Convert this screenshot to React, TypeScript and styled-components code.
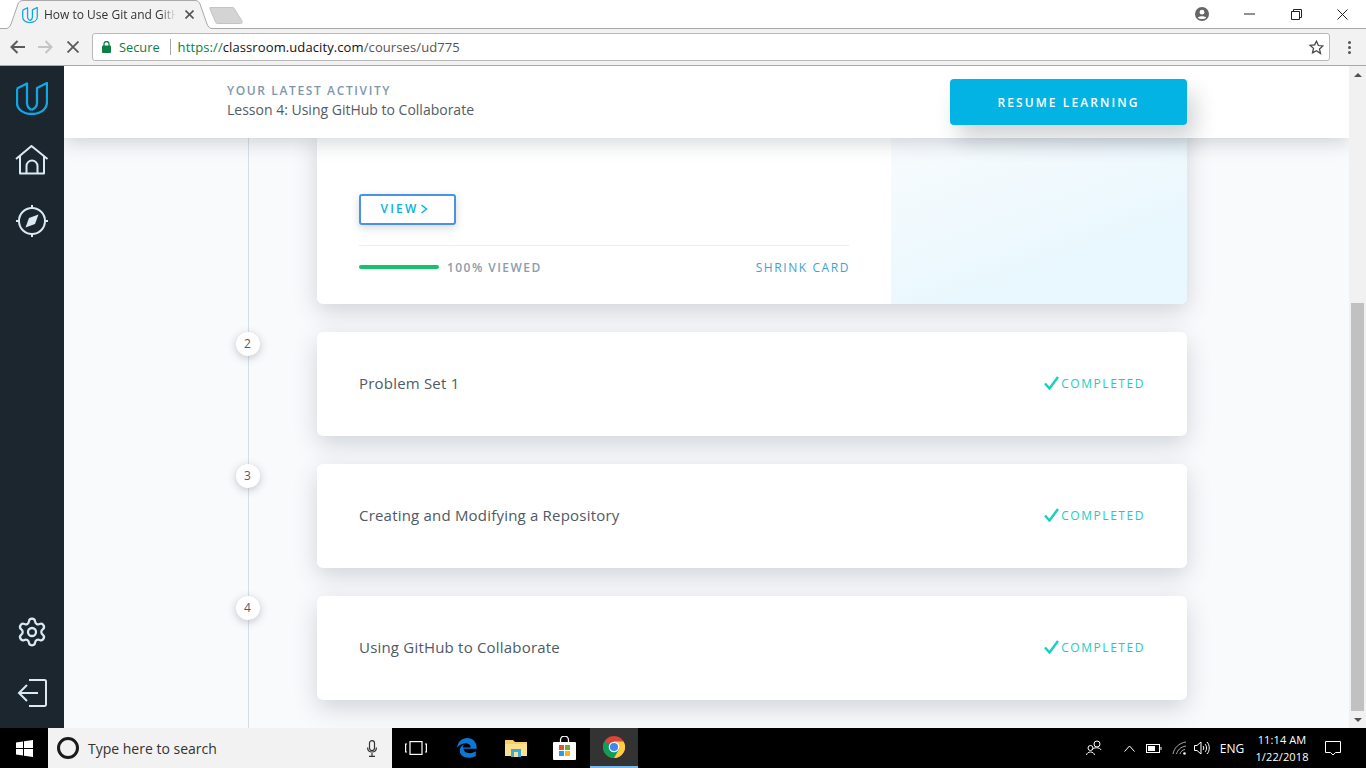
import React from "react";
import styled, { createGlobalStyle } from "styled-components";
import { Settings } from "lucide-react";

const Global = createGlobalStyle`
  html, body { margin: 0; padding: 0; overflow: hidden; }
  * { box-sizing: border-box; }
  body { font-family: "Open Sans", "Liberation Sans", sans-serif; }
`;

const Screen = styled.div`
  width: 1366px; height: 768px; display: flex; flex-direction: column; overflow: hidden; background: #fff;
`;

/* ---------- browser chrome ---------- */
const TabStrip = styled.div`
  height: 29px; flex: none; display: flex; align-items: flex-start; background: #fff;
  border-bottom: 1px solid #a9a9a9; position: relative;
`;
const Tab = styled.div`
  position: relative; margin: 0 0 -1px 5px; width: 208px; height: 29px; flex: none;
  display: flex; align-items: center; padding: 0 0 0 17px; gap: 6px; z-index: 1;
`;
const TabShape = styled.svg`
  position: absolute; left: 0; top: 0; z-index: -1;
`;
const TabTitle = styled.span`
  font: 12px "Open Sans", sans-serif; color: #333; width: 132px; white-space: nowrap; overflow: hidden;
  -webkit-mask-image: linear-gradient(90deg, #000 88%, transparent);
  mask-image: linear-gradient(90deg, #000 88%, transparent);
`;
const TabClose = styled.svg`
  margin-left: 3px; flex: none;
`;
const NewTab = styled.svg`
  flex: none; margin: 6px 0 0 -4px; position: relative; z-index: 1;
`;
const WindowControls = styled.div`
  margin-left: auto; display: flex; align-items: center; height: 28px; padding-right: 1px;
`;
const Ctl = styled.div<{ $w: number }>`
  width: ${p => p.$w}px; height: 26px; display: flex; align-items: center; justify-content: center;
`;

const Toolbar = styled.div`
  height: 37px; flex: none; background: #f2f2f2; border-bottom: 1px solid #a9a9a9;
  display: flex; align-items: center; padding-left: 3px;
`;
const NavBtn = styled.div`
  width: 28px; height: 28px; display: flex; align-items: center; justify-content: center; flex: none;
`;
const Omnibox = styled.div`
  margin-left: 5px; width: 1238px; height: 28px; flex: none; background: #fff; border: 1px solid #b9b9b9; border-radius: 3px;
  display: flex; align-items: center; padding: 0 5px 0 9px; font: 13px "Open Sans", sans-serif;
`;
const Secure = styled.span`
  color: #0b8043; margin-left: 8px; font-size: 12.8px;
`;
const OmniSep = styled.span`
  width: 1px; height: 16px; background: #a8a8a8; margin: 0 7px 0 10px;
`;
const Url = styled.span`
  color: #555; font-size: 13px; letter-spacing: .1px; white-space: nowrap; flex: 1;
  b { font-weight: 400; color: #111; }
  i { font-style: normal; color: #0b8043; }
`;
const MenuDots = styled.div`
  margin-left: 7px; width: 24px; display: flex; flex-direction: column; align-items: center; gap: 2px;
  span { width: 3px; height: 3px; border-radius: 50%; background: #555; }
`;

/* ---------- app ---------- */
const Body = styled.div`
  flex: 1; min-height: 0; display: flex;
`;
const Sidebar = styled.nav`
  width: 64px; flex: none; background: #1c262f; display: flex; flex-direction: column; justify-content: space-between;
  padding: 2px 0 5px;
`;
const SideGroup = styled.div`
  display: flex; flex-direction: column;
`;
const SideItem = styled.div`
  height: 61px; display: flex; align-items: center; justify-content: center; color: #dbe9f4;
`;
const Page = styled.div`
  flex: 1; min-width: 0; display: flex; flex-direction: column; background: #f9fafc; overflow: hidden;
`;
const ActivityBar = styled.header`
  height: 72px; flex: none; background: #fff; position: relative; z-index: 2;
  box-shadow: 0 5px 18px rgba(30, 40, 55, .18);
  display: flex; align-items: center; padding: 0 162px 0 163px; justify-content: space-between;
`;
const ActivityText = styled.div`
  display: flex; flex-direction: column; margin-top: -3px;
`;
const ActivityLabel = styled.span`
  font-size: 12px; line-height: 18px; letter-spacing: 1.62px; color: #7d97ad; font-weight: 600;
`;
const ActivityLesson = styled.span`
  font-size: 14px; line-height: 20px; color: #525c65;
`;
const Resume = styled.button`
  width: 237px; height: 46px; border: 0; border-radius: 4px; background: #02b3e4; color: #fff;
  font: 600 12px "Open Sans", sans-serif; letter-spacing: 2.1px; padding: 2px 0 0;
  box-shadow: 8px 14px 22px rgba(30, 40, 55, .2); margin-top: -1px;
`;
const Timeline = styled.div`
  flex: 1; min-height: 0; margin-left: 184px; padding-left: 68px; border-left: 1px solid #d5dfe9;
  width: 939px; display: flex; flex-direction: column; gap: 28px;
`;
const Card = styled.section<{ $h: number; $top?: number }>`
  position: relative; width: 870px; height: ${p => p.$h}px; flex: none; background: #fff; border-radius: 6px;
  margin-top: ${p => p.$top ?? 0}px; box-shadow: 0 8px 24px rgba(46, 60, 73, .2);
`;
const BigCard = styled(Card)`
  display: flex; overflow: visible;
`;
const BigLeft = styled.div`
  width: 574px; flex: none; padding: 0 42px 0 42px; display: flex; flex-direction: column; justify-content: flex-end;
`;
const BigRight = styled.div`
  flex: 1; border-radius: 0 6px 6px 0;
  background: linear-gradient(160deg, #f9fbfd 0%, #e9f8fe 70%);
`;
const ViewBtn = styled.button`
  width: 97px; height: 31px; background: #fff; border: 2px solid #4b92e6; border-radius: 3px;
  color: #02b3e4; font: 600 12px "Open Sans", sans-serif; letter-spacing: 2.2px; padding: 0 6px 2px 0;
  display: flex; align-items: center; justify-content: center; gap: 2px;
  box-shadow: 0 3px 8px rgba(46, 60, 73, .2);
`;
const CardFoot = styled.div`
  margin-top: 20px; height: 59px; border-top: 1px solid #eceff2; display: flex; align-items: center; padding-bottom: 16px;
`;
const Bar = styled.div`
  width: 80px; height: 4px; border-radius: 2px; background: #15c26b;
`;
const Viewed = styled.span`
  margin-left: 8px; font-size: 12px; font-weight: 600; letter-spacing: 1.45px; color: #8c9cac;
`;
const Shrink = styled.span`
  margin-left: auto; font-size: 12px; letter-spacing: 1.58px; color: #3fa2cc; margin-right: -1px;
`;
const Row = styled(Card)`
  display: flex; align-items: center; justify-content: space-between; padding: 0 42px 2px 42px;
`;
const RowTitle = styled.span`
  font-size: 15px; color: #4f5a64; letter-spacing: .2px;
`;
const Done = styled.span`
  display: flex; align-items: center; gap: 2px; font-size: 12px; letter-spacing: 1.55px; color: #1acdbd; font-weight: 400;
`;
const Badge = styled.div`
  position: absolute; left: -81px; top: 0; width: 24px; height: 24px; border-radius: 50%; background: #fff;
  display: flex; align-items: center; justify-content: center; font-size: 12px; color: #525c65; padding: 0 1px 2px 0;
  box-shadow: 0 2px 8px rgba(46, 60, 73, .28);
`;
const Scrollbar = styled.div`
  width: 17px; flex: none; background: #f1f1f1; display: flex; flex-direction: column; align-items: center;
`;
const ScrollArrow = styled.div<{ $down?: boolean }>`
  height: 17px; flex: none; display: flex; align-items: center; justify-content: center;
  &::before {
    content: ""; border-left: 4px solid transparent; border-right: 4px solid transparent;
    ${p => (p.$down ? "border-top: 4px solid #505050;" : "border-bottom: 4px solid #505050;")}
  }
`;
const ScrollSpace = styled.div`
  flex: 1; width: 100%; display: flex; flex-direction: column; justify-content: flex-end; align-items: center;
`;
const Thumb = styled.div`
  width: 13px; height: 408px; background: #c1c1c1; flex: none;
`;

/* ---------- taskbar ---------- */
const Taskbar = styled.footer`
  height: 40px; flex: none; background: #000; display: flex; align-items: stretch; color: #fff;
`;
const StartBtn = styled.div`
  width: 48px; display: flex; align-items: center; justify-content: center; flex: none;
`;
const Search = styled.div`
  width: 344px; flex: none; background: #f2f2f2; display: flex; align-items: center; padding: 0 15px 0 9px;
`;
const Cortana = styled.div`
  width: 22px; height: 22px; border: 3px solid #1a1a1a; border-radius: 50%; flex: none;
`;
const SearchText = styled.span`
  margin-left: 9px; font: 14px "Open Sans", sans-serif; color: #333; flex: 1;
`;
const TaskItem = styled.div<{ $w?: number; $active?: boolean }>`
  width: ${p => p.$w ?? 49}px; flex: none; display: flex; align-items: center; justify-content: center;
  background: ${p => (p.$active ? "#333" : "transparent")};
  border-bottom: ${p => (p.$active ? "2px solid #76b9ed" : "0")};
  svg { flex: none; }
`;
const Tray = styled.div`
  margin-left: auto; display: flex; align-items: stretch; padding-right: 8px;
`;
const TrayText = styled.span`
  font: 12px "Open Sans", sans-serif; color: #fff;
`;
const Clock = styled.div`
  width: 52px; flex: none; display: flex; flex-direction: column; align-items: center; justify-content: center;
  font: 11px/17px "Open Sans", sans-serif; letter-spacing: .12px; color: #fff; white-space: nowrap;
`;

const ULogo = ({ size, h, sw }: { size: number; h: number; sw: number }) => (
  <svg width={size} height={h} viewBox="0 0 32 33" fill="none" stroke="#0fa8e6" strokeWidth={sw} strokeLinejoin="round">
    <path d="M1 6.500 11 1.500V21c0 3 1.500 5.300 4.500 7" />
    <path d="M1 6.500V21c0 6.500 6.500 11 14.500 11 8.500 0 15.500-4.500 15.500-12V1l-10 5v15c0 3-2 5.500-5.500 7" />
  </svg>
);

const Check = () => (
  <svg width="15" height="14" viewBox="0 0 15 14" fill="none" stroke="#1acdbd" strokeWidth="2.400">
    <path d="M1 7.500 5.500 12.500 14 1" />
  </svg>
);

const rows = [
  { n: 2, title: "Problem Set 1" },
  { n: 3, title: "Creating and Modifying a Repository" },
  { n: 4, title: "Using GitHub to Collaborate" },
];

export default function App() {
  return (
    <Screen>
      <Global />
      <TabStrip>
        <Tab>
          <TabShape width="208" height="29" viewBox="0 0 208 29" fill="none">
            <path d="M0 28.500H1C3 28.500 5 27 6 24L13 4C14 2 15 .5 18 .5H190c3 0 4 1.500 5 3.500l7 20c1 3 3 4.500 5 4.500h1V30H0Z" fill="#f2f2f2" />
            <path d="M0 28.500H1C3 28.500 5 27 6 24L13 4C14 2 15 .5 18 .5H190c3 0 4 1.500 5 3.500l7 20c1 3 3 4.500 5 4.500h1" stroke="#a9a9a9" />
          </TabShape>
          <ULogo size={16} h={16} sw={2.6} />
          <TabTitle>How to Use Git and GitHub</TabTitle>
          <TabClose width="9" height="9" viewBox="0 0 9 9" stroke="#555" strokeWidth="1.600"><path d="M.5.5l8 8M8.500.5l-8 8" /></TabClose>
        </Tab>
        <NewTab width="34" height="19" viewBox="0 0 34 19">
          <path d="M1 1.500h22c1.500 0 2 .5 2.500 1.500L33 15c.6 1.500 0 2.500-1.500 2.500H9c-1.500 0-2-.5-2.500-1.500L1 3c-.5-1 0-1.500 0-1.500Z" fill="#d4d4d4" stroke="#c4c4c4" />
        </NewTab>
        <WindowControls>
          <Ctl $w={48}>
            <svg width="14" height="14" viewBox="0 0 14 14"><circle cx="7" cy="7" r="7" fill="#666" /><circle cx="7" cy="5.200" r="2.400" fill="#fff" /><path d="M2.800 10.800C4 8.800 10 8.800 11.200 10.800 9.500 12.500 4.500 12.500 2.800 10.800Z" fill="#fff" /></svg>
          </Ctl>
          <Ctl $w={47}><svg width="11" height="2" viewBox="0 0 11 2"><path d="M0 1h11" stroke="#222" /></svg></Ctl>
          <Ctl $w={46}>
            <svg width="11" height="11" viewBox="0 0 11 11" fill="none" stroke="#222"><path d="M.5 2.500h8v8h-8zM2.500 2.500v-2h8v8h-2" /></svg>
          </Ctl>
          <Ctl $w={46}><svg width="11" height="11" viewBox="0 0 11 11" stroke="#222"><path d="M.5.5l10 10M10.500.5l-10 10" /></svg></Ctl>
        </WindowControls>
      </TabStrip>

      <Toolbar>
        <NavBtn><svg width="15" height="14" viewBox="0 0 15 14" fill="none" stroke="#5a5a5a" strokeWidth="2"><path d="M15 7H2M7.500 1 1.500 7l6 6" /></svg></NavBtn>
        <NavBtn><svg width="15" height="14" viewBox="0 0 15 14" fill="none" stroke="#c4c4c4" strokeWidth="2"><path d="M0 7h13M7.500 1l6 6-6 6" /></svg></NavBtn>
        <NavBtn><svg width="12" height="12" viewBox="0 0 12 12" stroke="#5a5a5a" strokeWidth="1.800"><path d="M.5.5l11 11M11.500.5l-11 11" /></svg></NavBtn>
        <Omnibox>
          <svg width="9" height="12" viewBox="0 0 9 12"><rect y="4.500" width="9" height="7.500" rx="1" fill="#0b8043" /><path d="M2 5V3a2.500 2.500 0 0 1 5 0v2" fill="none" stroke="#0b8043" strokeWidth="1.300" /></svg>
          <Secure>Secure</Secure>
          <OmniSep />
          <Url><i>https://</i><b>classroom.udacity.com</b>/courses/ud775</Url>
          <svg width="15" height="15" viewBox="0 0 24 24" fill="none" stroke="#444" strokeWidth="2"><path d="m12 2 3 6.800 7.300.7-5.500 4.900 1.600 7.200L12 17l-6.400 3.600 1.600-7.200-5.500-4.900 7.300-.7z" /></svg>
        </Omnibox>
        <MenuDots><span /><span /><span /></MenuDots>
      </Toolbar>

      <Body>
        <Sidebar>
          <SideGroup>
            <SideItem><ULogo size={32} h={33} sw={2.3} /></SideItem>
            <SideItem>
              <svg width="34" height="30" viewBox="0 0 34 30" fill="none" stroke="currentColor" strokeWidth="2" strokeLinejoin="round">
                <path d="M1 14 16.500 1 32.500 14M5 11v17.500h24V11M11.500 28.500V21a5.500 5.500 0 0 1 11 0v7.500" />
              </svg>
            </SideItem>
            <SideItem>
              <svg width="32" height="32" viewBox="0 0 32 32" fill="none" stroke="currentColor" strokeWidth="2">
                <circle cx="16" cy="16" r="13" />
                <path d="M16 0v3M16 29v3M0 16h3M29 16h3" />
                <path d="M22.500 9.500 19 19 9.500 22.500 13 13Z" fill="currentColor" stroke="none" />
              </svg>
            </SideItem>
          </SideGroup>
          <SideGroup>
            <SideItem><Settings size={32} strokeWidth={1.7} /></SideItem>
            <SideItem>
              <svg width="30" height="30" viewBox="0 0 30 30" fill="none" stroke="currentColor" strokeWidth="2">
                <path d="M12 2h15.500a1.500 1.500 0 0 1 1.500 1.500v23a1.500 1.500 0 0 1-1.500 1.500H12M21 15H2M10 7l-8 8 8 8" />
              </svg>
            </SideItem>
          </SideGroup>
        </Sidebar>

        <Page>
          <ActivityBar>
            <ActivityText>
              <ActivityLabel>YOUR LATEST ACTIVITY</ActivityLabel>
              <ActivityLesson>Lesson 4: Using GitHub to Collaborate</ActivityLesson>
            </ActivityText>
            <Resume>RESUME LEARNING</Resume>
          </ActivityBar>
          <Timeline>
            <BigCard $h={176} $top={-10}>
              <BigLeft>
                <ViewBtn>VIEW <svg width="8" height="10" viewBox="0 0 8 10" fill="none" stroke="#02b3e4" strokeWidth="1.500"><path d="m1.500 1 5 4-5 4" /></svg></ViewBtn>
                <CardFoot>
                  <Bar />
                  <Viewed>100% VIEWED</Viewed>
                  <Shrink>SHRINK CARD</Shrink>
                </CardFoot>
              </BigLeft>
              <BigRight />
            </BigCard>
            {rows.map(r => (
              <Row key={r.n} $h={104}>
                <Badge>{r.n}</Badge>
                <RowTitle>{r.title}</RowTitle>
                <Done><Check />COMPLETED</Done>
              </Row>
            ))}
          </Timeline>
        </Page>

        <Scrollbar>
          <ScrollArrow />
          <ScrollSpace><Thumb /></ScrollSpace>
          <ScrollArrow $down />
        </Scrollbar>
      </Body>

      <Taskbar>
        <StartBtn>
          <svg width="17" height="17" viewBox="0 0 17 17" fill="#fff"><path d="M0 2.400 7 1.400V8H0ZM8 1.200 17 0V8H8ZM0 9H7V15.600L0 14.600ZM8 9H17V17L8 15.800Z" /></svg>
        </StartBtn>
        <Search>
          <Cortana />
          <SearchText>Type here to search</SearchText>
          <svg width="10" height="17" viewBox="0 0 10 17" fill="none" stroke="#333" strokeWidth="1.200"><rect x="2.500" y=".6" width="5" height="10" rx="2.500" /><path d="M.6 7.500c0 6 8.800 6 8.800 0M5 13v3.400M2 16.400h6" /></svg>
        </Search>
        <TaskItem $w={48}>
          <svg width="22" height="14" viewBox="0 0 22 14" fill="none" stroke="#fff" strokeWidth="1.200"><rect x="5" y=".6" width="12" height="12.800" /><path d="M2 3H.6v8H2M20 3h1.400v8H20" /></svg>
        </TaskItem>
        <TaskItem $w={54}>
          <svg width="20" height="20" viewBox="0 0 20 20"><path d="M.2 9.500C.8 3.500 5.200 0 10 0c5.800 0 9.800 4 9.800 10.800H6.500c.2 4.500 7 5.800 12.300 2.500v4.600C12 21.500 2.600 19.500 2.800 12.200c0-2.500 1.500-4.500 4.200-5.700-.8 1-1.200 2-1.300 3h8c0-4.500-7.500-6.500-13.500-.000Z" fill="#0a78d7" /></svg>
        </TaskItem>
        <TaskItem $w={44}>
          <svg width="22" height="18" viewBox="0 0 22 18"><path d="M0 1h8l2 2h12v14H0Z" fill="#f4cf6a" /><rect y="5" width="22" height="12" fill="#fde08a" /><rect x="6" y="10" width="10" height="8" fill="#3ba9de" /><rect x="9" y="13" width="4" height="5" fill="#fde08a" /></svg>
        </TaskItem>
        <TaskItem $w={52}>
          <svg width="23" height="24" viewBox="0 0 23 24"><path d="M7.500 7V4a4 4 0 0 1 8 0v3" fill="none" stroke="#fff" strokeWidth="1.300" /><rect y="6" width="23" height="18" rx="1" fill="#fff" /><rect x="6" y="9" width="5" height="5" fill="#e4552d" /><rect x="12" y="9" width="5" height="5" fill="#68b034" /><rect x="6" y="15" width="5" height="5" fill="#21a1e6" /><rect x="12" y="15" width="5" height="5" fill="#f7b614" /></svg>
        </TaskItem>
        <TaskItem $w={48} $active>
          <svg width="22" height="22" viewBox="0 0 20 20">
            <circle cx="10" cy="10" r="10" fill="#db4437" />
            <path d="M10 10 1.300 5A10 10 0 0 0 10 20l5-8.700Z" fill="#0f9d58" />
            <path d="M10 10 15 11.300 10 20A10 10 0 0 0 18.700 5H10Z" fill="#ffcd40" />
            <circle cx="10" cy="10" r="4.800" fill="#fff" />
            <circle cx="10" cy="10" r="3.700" fill="#4285f4" />
          </svg>
        </TaskItem>
        <Tray>
          <TaskItem $w={36}>
            <svg width="16" height="16" viewBox="0 0 16 16" fill="none" stroke="#fff"><circle cx="11" cy="4" r="3" /><path d="M6 10c1-3 8-3 9 0" /><circle cx="4.500" cy="8" r="2.500" /><path d="M.5 15c.5-4 7.500-4 8 0" /></svg>
          </TaskItem>
          <TaskItem $w={34} >
            <svg width="11" height="7" viewBox="0 0 11 7" fill="none" stroke="#fff"><path d="m.5 6.500 5-5.500 5 5.500" /></svg>
          </TaskItem>
          <TaskItem $w={16}>
            <svg width="16" height="9" viewBox="0 0 16 9" fill="none" stroke="#fff"><rect x=".5" y=".5" width="13" height="8" /><rect x="2" y="2" width="7" height="5" fill="#fff" stroke="none" /><path d="M15 3v3" /></svg>
          </TaskItem>
          <TaskItem $w={34}>
            <svg width="15" height="14" viewBox="0 0 15 14" fill="none" stroke="#aaa"><path d="M1 13C2 7 7 2 14 1M4.500 13c1-4 4-7 9.500-8M8 13c.5-2 2-4 5-4.500" /><circle cx="12.500" cy="12.500" r="1.300" fill="#fff" stroke="none" /></svg>
          </TaskItem>
          <TaskItem $w={12}>
            <svg width="16" height="14" viewBox="0 0 16 14" fill="none" stroke="#fff"><path d="M.5 4.500H3L7 1v12L3 9.500H.5ZM9 5c1 1 1 3 0 4M11 3c2 2 2 6 0 8M13 1c3 3 3 9 0 12" /></svg>
          </TaskItem>
          <TaskItem $w={48}><TrayText>ENG</TrayText></TaskItem>
          <Clock><span>11:14 AM</span><span>1/22/2018</span></Clock>
          <TaskItem $w={50}>
            <svg width="16" height="15" viewBox="0 0 16 15" fill="none" stroke="#fff"><path d="M.5.5h15v11h-5L8 14l-2.500-2.500h-5Z" /></svg>
          </TaskItem>
        </Tray>
      </Taskbar>
    </Screen>
  );
}
